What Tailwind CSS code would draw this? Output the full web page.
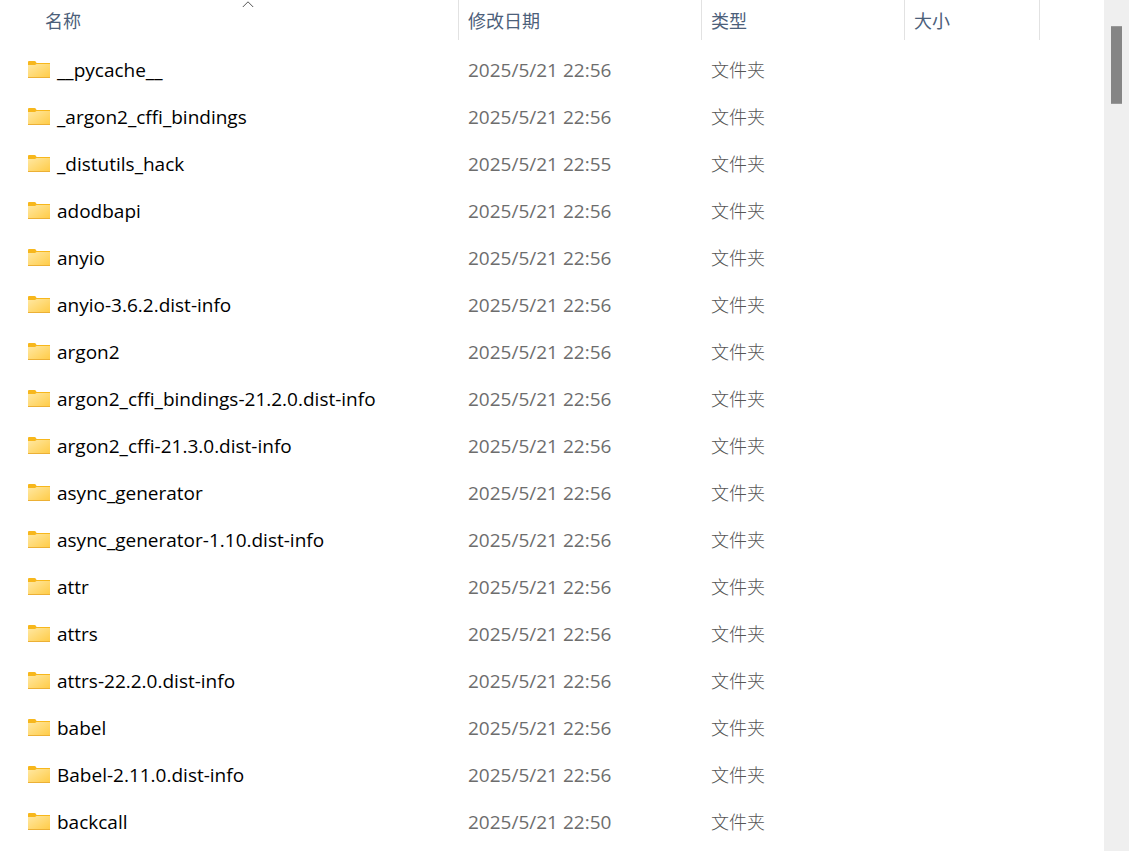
<!DOCTYPE html>
<html lang="zh-CN">
<head>
  <meta charset="UTF-8" />
  <meta name="viewport" content="width=device-width, initial-scale=1.0" />
  <title>site-packages</title>
  <script src="https://cdn.jsdelivr.net/npm/@tailwindcss/browser@4"></script>
</head>
<body class="bg-white font-['Open_Sans','Noto_Sans_CJK_SC',sans-serif]">

  <div class="flex h-screen overflow-hidden pr-px pb-px">

    <!-- File List -->
    <main class="flex-1 min-w-0 overflow-hidden">
      <table class="w-full table-fixed border-collapse text-left">
        <colgroup>
          <col class="w-[458px]" />
          <col class="w-[243px]" />
          <col class="w-[203px]" />
          <col class="w-[135px]" />
          <col />
        </colgroup>
        <thead class="text-lg text-[#4c607a]">
          <tr class="h-[46px]">
            <th class="p-0 align-top font-normal" aria-sort="ascending">
              <button class="relative w-full h-10 pt-0.5 pl-[45px] text-left">
                名称
                <svg class="absolute top-0 left-[242px] w-3 h-2" viewBox="0 0 12 8" fill="none" stroke="#555555"><path d="M0.8 7 L6 1.8 L11.2 7" /></svg>
              </button>
            </th>
            <th class="p-0 align-top font-normal"><button class="w-full h-10 pt-0.5 pl-[9px] text-left border-l border-[#e2e2e2]">修改日期</button></th>
            <th class="p-0 align-top font-normal"><button class="w-full h-10 pt-0.5 pl-[9px] text-left border-l border-[#e2e2e2]">类型</button></th>
            <th class="p-0 align-top font-normal"><button class="w-full h-10 pt-0.5 pl-[9px] text-left border-l border-[#e2e2e2]">大小</button></th>
            <td class="p-0 align-top"><div class="h-10 border-l border-[#e2e2e2]"></div></td>
          </tr>
        </thead>
        <tbody id="fileList" class="text-[19px] leading-[30px] text-[#6d6d6d]"></tbody>
      </table>
    </main>

    <!-- Scrollbar -->
    <div class="w-[25px] shrink-0 bg-[#efefef] pt-[26px] pl-[7px]">
      <div class="w-[11px] h-[78px] bg-[#858585] border-y border-[#999999]"></div>
    </div>
  </div>

  <!-- Folder icon -->
  <svg class="absolute size-0" aria-hidden="true">
    <defs>
      <linearGradient id="folderFill" x1="0" y1="0" x2="1" y2="1">
        <stop offset="0" stop-color="#ffe8a3" />
        <stop offset="1" stop-color="#ffcb45" />
      </linearGradient>
    </defs>
    <symbol id="folder" viewBox="0 0 22 17">
      <path d="M0 1 Q0 0 1 0 H6.5 Q7.5 0 8 1 L8.5 2 H22 V4 H0 Z" fill="#f7b71c" />
      <path d="M0 4 H7 L8.5 3 H22 V17 H0 Z" fill="url(#folderFill)" />
      <path d="M0 16 H22 V17 H0 Z" fill="#ecb035" />
    </symbol>
  </svg>

  <script>
    const files = [
      { name: "__pycache__", date: "2025/5/21 22:56" },
      { name: "_argon2_cffi_bindings", date: "2025/5/21 22:56" },
      { name: "_distutils_hack", date: "2025/5/21 22:55" },
      { name: "adodbapi", date: "2025/5/21 22:56" },
      { name: "anyio", date: "2025/5/21 22:56" },
      { name: "anyio-3.6.2.dist-info", date: "2025/5/21 22:56" },
      { name: "argon2", date: "2025/5/21 22:56" },
      { name: "argon2_cffi_bindings-21.2.0.dist-info", date: "2025/5/21 22:56" },
      { name: "argon2_cffi-21.3.0.dist-info", date: "2025/5/21 22:56" },
      { name: "async_generator", date: "2025/5/21 22:56" },
      { name: "async_generator-1.10.dist-info", date: "2025/5/21 22:56" },
      { name: "attr", date: "2025/5/21 22:56" },
      { name: "attrs", date: "2025/5/21 22:56" },
      { name: "attrs-22.2.0.dist-info", date: "2025/5/21 22:56" },
      { name: "babel", date: "2025/5/21 22:56" },
      { name: "Babel-2.11.0.dist-info", date: "2025/5/21 22:56" },
      { name: "backcall", date: "2025/5/21 22:50" }
    ];

    const fileList = document.getElementById("fileList");
    files.forEach(file => {
      const row = document.createElement("tr");
      row.className = "h-[47px]";
      row.innerHTML = `
        <td class="p-0 pl-7 text-black">
          <div class="flex items-center gap-[7px]">
            <svg class="w-[22px] h-[17px] shrink-0"><use href="#folder" /></svg>
            <span>${file.name}</span>
          </div>
        </td>
        <td class="p-0 pl-[10px]">${file.date}</td>
        <td class="p-0 pl-[10px] text-lg/7 font-light text-[#555555]">文件夹</td>
        <td class="p-0"></td>
        <td class="p-0"></td>`;
      fileList.appendChild(row);
    });
  </script>

</body>
</html>
